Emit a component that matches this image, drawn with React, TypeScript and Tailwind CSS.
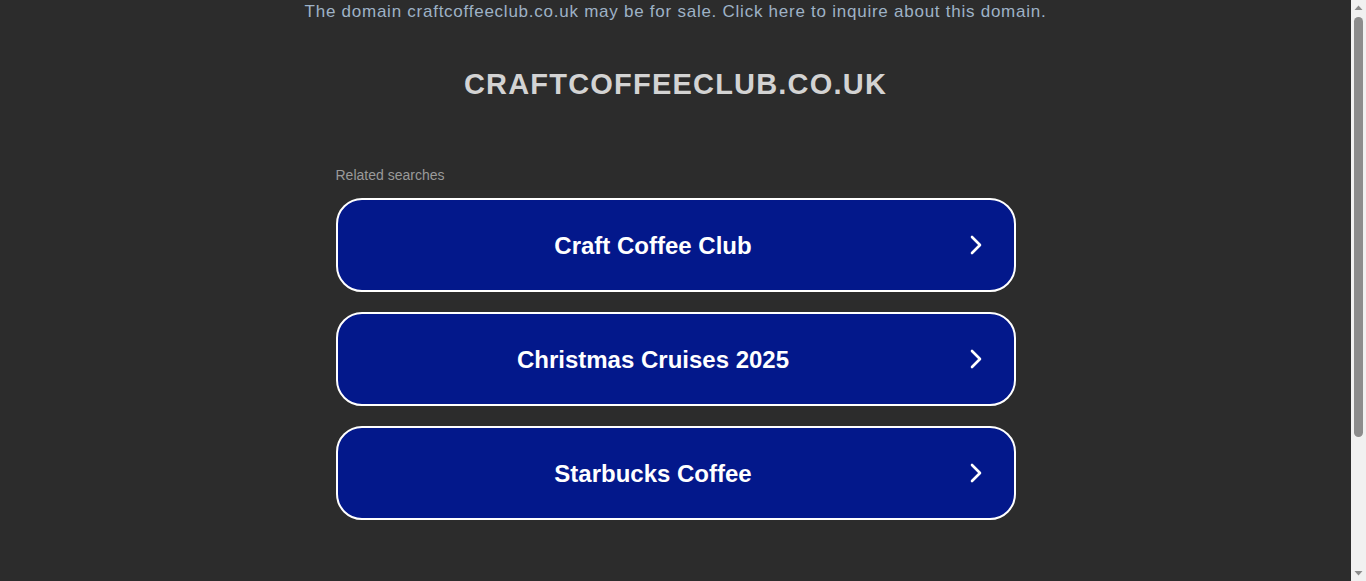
import * as React from "react";

const searches = ["Craft Coffee Club", "Christmas Cruises 2025", "Starbucks Coffee"];

const Chevron = () => (
  <svg width="14" height="22" viewBox="0 0 14 22" fill="none">
    <path d="M3 3 L11 11 L3 19" stroke="white" strokeWidth="2.6" strokeLinecap="round" strokeLinejoin="round" />
  </svg>
);

// browser scrollbar seen in the screenshot
const Scrollbar = () => (
  <div className="flex h-full w-[15px] flex-col items-center bg-[#f1f1f1]">
    <svg width="15" height="15" viewBox="0 0 15 15" className="shrink-0">
      <path d="M3.5 10 L7.5 5.5 L11.5 10 Z" fill="#8c8c8c" />
    </svg>
    <div className="mt-[2px] h-[420px] w-[9px] rounded-full bg-[#8c8c8c]" />
    <div className="flex-1" />
    <svg width="15" height="15" viewBox="0 0 15 15" className="shrink-0">
      <path d="M3.5 5 L7.5 9.5 L11.5 5 Z" fill="#8c8c8c" />
    </svg>
  </div>
);

export default function App() {
  return (
    <div className="flex h-[581px] overflow-hidden bg-[#2c2c2c] font-['Liberation_Sans',Arial,sans-serif]">
      <div className="flex-1">
        <div className="pt-[2px] text-center text-[17px] leading-[20px] tracking-[0.75px] text-[#9eb2c6]">
          The domain craftcoffeeclub.co.uk may be for sale. Click here to inquire about this domain.
        </div>
        <h1 className="mt-[46px] text-center text-[29px] font-bold leading-[32px] tracking-[1.2px] text-[#d3d3d3]">
          CRAFTCOFFEECLUB.CO.UK
        </h1>
        <div className="mx-auto mt-[66px] w-[680px]">
          <div className="text-[14px] leading-[18px] text-[#9a9a9a]">Related searches</div>
          <div className="mt-[14px] flex flex-col gap-[20px]">
            {searches.map((s) => (
              <div
                key={s}
                className="flex h-[94px] items-center rounded-[26px] border-2 border-white bg-[#03188b] pr-[31px]"
              >
                <span className="flex-1 pt-[2px] text-center text-[24px] font-bold text-white">{s}</span>
                <Chevron />
              </div>
            ))}
          </div>
        </div>
      </div>
      <Scrollbar />
    </div>
  );
}
